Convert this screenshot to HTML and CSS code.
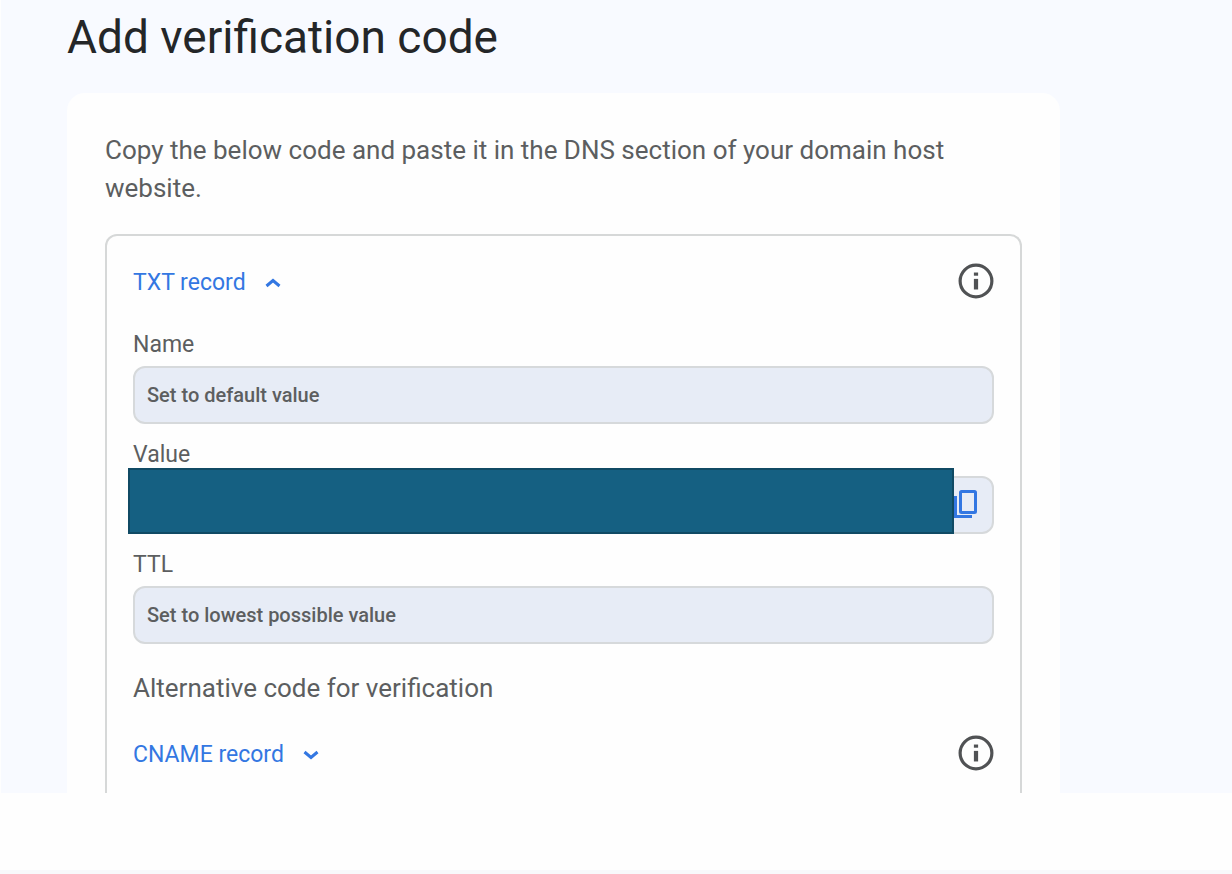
FILE: index.html
```html
<!DOCTYPE html>
<html lang="en">
<head>
<meta charset="utf-8">
<meta name="viewport" content="width=device-width, initial-scale=1">
<title>Add verification code</title>
<link rel="stylesheet" href="styles.css">
</head>
<body>
<main class="panel">
  <h1 class="title">Add verification code</h1>
  <section class="card">
    <p class="intro">Copy the below code and paste it in the DNS section of your domain host website.</p>
    <div class="records">
      <div class="record-head">
        <button class="toggle" type="button" aria-expanded="true">TXT record
          <svg class="chevron" viewBox="0 0 16 10" aria-hidden="true"><path d="M1.500 8 8 2.500l6.500 5.500"/></svg>
        </button>
        <button class="info" type="button" aria-label="About TXT record">
          <svg class="info-icon" viewBox="0 0 34 34" aria-hidden="true"><circle cx="17" cy="17" r="15"/><path d="M17 15v10"/><path d="M17 9v3"/></svg>
        </button>
      </div>
      <div class="fields">
        <div class="field">
          <label class="label" for="name">Name</label>
          <input class="input" id="name" value="Set to default value" readonly>
        </div>
        <div class="field">
          <label class="label" for="value">Value</label>
          <div class="value-box">
            <input class="input" id="value" value="" readonly>
            <button class="copy" type="button" aria-label="Copy value">
              <svg class="copy-icon" viewBox="0 0 24 28" aria-hidden="true"><rect x="7.500" y="1.500" width="15" height="21" rx="1"/><path d="M2.500 6v20.500H19"/></svg>
            </button>
            <div class="redaction"></div>
          </div>
        </div>
        <div class="field">
          <label class="label" for="ttl">TTL</label>
          <input class="input" id="ttl" value="Set to lowest possible value" readonly>
        </div>
      </div>
      <p class="alternative">Alternative code for verification</p>
      <div class="record-head">
        <button class="toggle" type="button" aria-expanded="false">CNAME record
          <svg class="chevron" viewBox="0 0 16 10" aria-hidden="true"><path d="M1.500 2 8 7.500 14.500 2"/></svg>
        </button>
        <button class="info" type="button" aria-label="About CNAME record">
          <svg class="info-icon" viewBox="0 0 34 34" aria-hidden="true"><circle cx="17" cy="17" r="15"/><path d="M17 15v10"/><path d="M17 9v3"/></svg>
        </button>
      </div>
    </div>
  </section>
</main>
<footer class="strip"></footer>
</body>
</html>
```
FILE: styles.css
```css
* {
  box-sizing: border-box;
}

body {
  margin: 0;
  min-height: 100vh;
  display: flex;
  flex-direction: column;
  justify-content: space-between;
  background: #fefefe;
  color: #5c5e60;
  font-family: Roboto, "Liberation Sans", sans-serif;
}

.panel {
  margin-left: 1px;
  padding: 7px 14% 0 66px;
  background: #f8faff;
}

.title {
  margin: 0 0 26px;
  color: #242628;
  font-size: 46px;
  font-weight: 400;
  line-height: 60px;
}

.card {
  padding: 38px 38px 0;
  border-radius: 18px 18px 0 0;
  background: #fefefe;
}

.intro {
  margin: 0 0 27px;
  font-size: 26px;
  line-height: 38px;
}

.records {
  padding: 25px 26px 20px;
  border: 2px solid #d6d8d8;
  border-bottom: 0;
  border-radius: 12px 12px 0 0;
}

.record-head {
  display: flex;
  align-items: center;
  justify-content: space-between;
}

.toggle,
.info,
.copy {
  padding: 0;
  border: 0;
  background: none;
  cursor: pointer;
}

.toggle {
  display: flex;
  align-items: center;
  gap: 19px;
  padding-top: 4px;
  color: #3377e2;
  font: 400 23px/36px Roboto, "Liberation Sans", sans-serif;
}

.chevron {
  width: 16px;
  height: 10px;
  fill: none;
  stroke: currentColor;
  stroke-width: 3;
}

.info {
  display: flex;
  color: #505254;
}

.info-icon {
  width: 36px;
  height: 36px;
  fill: none;
  stroke: currentColor;
  stroke-width: 3;
}

.info-icon path {
  stroke-width: 4;
}

.fields {
  display: grid;
  gap: 17px;
  margin: 30px 0 26px;
}

.field {
  display: grid;
  gap: 7px;
}

.label {
  font-size: 23px;
  line-height: 28px;
}

.input {
  width: 100%;
  height: 58px;
  padding: 0 12px;
  border: 2px solid #d6d9db;
  border-radius: 12px;
  background: #e7ecf6;
  color: #5c5e60;
  font: 500 20px/28px Roboto, "Liberation Sans", sans-serif;
}

.value-box {
  position: relative;
}

.copy {
  position: absolute;
  top: 14px;
  right: 17px;
  display: flex;
  color: #3377e2;
}

.copy-icon {
  width: 24px;
  height: 28px;
  fill: none;
  stroke: currentColor;
  stroke-width: 3;
}

.redaction {
  position: absolute;
  top: -8px;
  right: 40px;
  bottom: 0;
  left: -5px;
  border: 2px solid #104a64;
  background: #156082;
}

.alternative {
  margin: 0 0 27px;
  font-size: 26px;
  line-height: 36px;
}

.strip {
  height: 4px;
  background: #f8f9fb;
}
```
